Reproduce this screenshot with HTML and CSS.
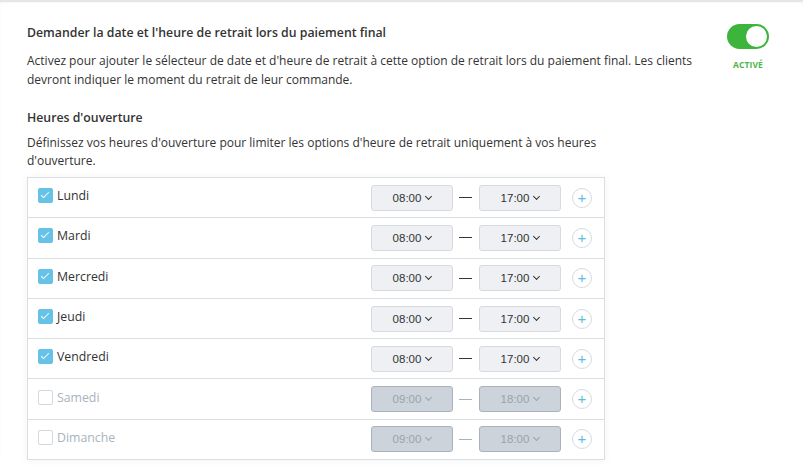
FILE: index.html
```html
<!DOCTYPE html>
<html>
  <head>
    <title>Retrait</title>
    <meta name="viewport" content="width=device-width, initial-scale=1">
    <link rel="stylesheet" href="styles.css">
  </head>
  <body>
    <div class="panel">
      <div class="setting">
        <div class="setting-text">
          <h3>Demander la date et l'heure de retrait lors du paiement final</h3>
          <p>Activez pour ajouter le sélecteur de date et d'heure de retrait à cette option de retrait lors du paiement final. Les clients devront indiquer le moment du retrait de leur commande.</p>
        </div>
        <div class="toggle-wrap">
          <div class="toggle on"><span class="knob"></span></div>
          <div class="toggle-label">ACTIVÉ</div>
        </div>
      </div>

      <div class="hours">
        <h3>Heures d'ouverture</h3>
        <p>Définissez vos heures d'ouverture pour limiter les options d'heure de retrait uniquement à vos heures d'ouverture.</p>

        <div class="days">
          <div class="day">
            <label class="check"><span class="box checked"></span>Lundi</label>
            <div class="times">
              <div class="select">08:00 <span class="caret"></span></div>
              <span class="dash"></span>
              <div class="select">17:00 <span class="caret"></span></div>
              <span class="add">+</span>
            </div>
          </div>
          <div class="day">
            <label class="check"><span class="box checked"></span>Mardi</label>
            <div class="times">
              <div class="select">08:00 <span class="caret"></span></div>
              <span class="dash"></span>
              <div class="select">17:00 <span class="caret"></span></div>
              <span class="add">+</span>
            </div>
          </div>
          <div class="day">
            <label class="check"><span class="box checked"></span>Mercredi</label>
            <div class="times">
              <div class="select">08:00 <span class="caret"></span></div>
              <span class="dash"></span>
              <div class="select">17:00 <span class="caret"></span></div>
              <span class="add">+</span>
            </div>
          </div>
          <div class="day">
            <label class="check"><span class="box checked"></span>Jeudi</label>
            <div class="times">
              <div class="select">08:00 <span class="caret"></span></div>
              <span class="dash"></span>
              <div class="select">17:00 <span class="caret"></span></div>
              <span class="add">+</span>
            </div>
          </div>
          <div class="day">
            <label class="check"><span class="box checked"></span>Vendredi</label>
            <div class="times">
              <div class="select">08:00 <span class="caret"></span></div>
              <span class="dash"></span>
              <div class="select">17:00 <span class="caret"></span></div>
              <span class="add">+</span>
            </div>
          </div>
          <div class="day off">
            <label class="check"><span class="box"></span>Samedi</label>
            <div class="times">
              <div class="select">09:00 <span class="caret"></span></div>
              <span class="dash"></span>
              <div class="select">18:00 <span class="caret"></span></div>
              <span class="add">+</span>
            </div>
          </div>
          <div class="day off">
            <label class="check"><span class="box"></span>Dimanche</label>
            <div class="times">
              <div class="select">09:00 <span class="caret"></span></div>
              <span class="dash"></span>
              <div class="select">18:00 <span class="caret"></span></div>
              <span class="add">+</span>
            </div>
          </div>
        </div>
      </div>
    </div>
  </body>
</html>
```

FILE: styles.css
```css
html {
  height: 100%;
}

body {
  margin: 0;
  height: 100%;
  background: #fff;
  color: #333;
  font-family: "Open Sans", "Noto Sans", sans-serif;
  font-size: 12px;
}

.panel {
  border-top: 2px solid #e4e7ea;
  box-shadow: inset 0 1px 2px rgba(0,0,0,.04);
  padding: 22px 0 0 27px;
}

h3 {
  margin: 0;
  font-size: 12.3px;
  font-weight: 600;
  line-height: 18px;
}

p {
  margin: 0;
  line-height: 19px;
}

.setting {
  display: flex;
  align-items: flex-start;
}

.setting-text {
  width: 672px;
}

.setting-text h3 {
  margin-bottom: 9px;
}

.toggle-wrap {
  margin: 0 0 0 28px;
  width: 42px;
  display: flex;
  flex-direction: column;
  align-items: center;
}

.toggle {
  width: 42px;
  height: 25px;
  border-radius: 13px;
  background: #cfd5db;
  position: relative;
}

.toggle.on {
  background: #3db53d;
}

.knob {
  position: absolute;
  top: 2px;
  right: 2px;
  width: 21px;
  height: 21px;
  border-radius: 50%;
  background: #fff;
}

.toggle-label {
  margin-top: 10px;
  font-size: 8.5px;
  font-weight: 700;
  color: #4bb64b;
  letter-spacing: .1px;
}

.hours {
  margin-top: 20px;
  width: 578px;
}

.hours h3 {
  margin-bottom: 7px;
}

.hours p {
  line-height: 18px;
  margin-bottom: 7px;
}

.days {
  border: 1px solid #d9dee3;
  box-shadow: 0 1px 8px rgba(0,0,0,.05);
}

.day {
  display: flex;
  align-items: center;
  justify-content: space-between;
  height: 39.3px;
  padding: 0 12px 0 10px;
}

.day + .day {
  border-top: 1px solid #d9dee3;
}

.check {
  display: flex;
  align-items: center;
  margin-top: -4px;
  font-size: 12.3px;
}

.box {
  width: 13px;
  height: 13px;
  border: 1px solid #d3d9df;
  border-radius: 2px;
  margin-right: 4px;
  background: #fff;
  position: relative;
}

.box.checked {
  background: #66c2e6;
  border-color: #66c2e6;
}

.box.checked::after {
  content: "";
  position: absolute;
  left: 4px;
  top: 1px;
  width: 3px;
  height: 7px;
  border: solid #fff;
  border-width: 0 1.5px 1.5px 0;
  transform: rotate(45deg);
}

.times {
  display: flex;
  align-items: center;
}

.select {
  width: 80px;
  height: 24px;
  border: 1px solid #d6dade;
  border-radius: 3px;
  background: #eef0f3;
  display: flex;
  align-items: center;
  justify-content: center;
  font-family: "Liberation Sans", Arial, sans-serif;
  font-size: 11.5px;
  color: #333;
}

.caret {
  width: 4px;
  height: 4px;
  border: solid #333;
  border-width: 0 1.5px 1.5px 0;
  transform: rotate(45deg);
  margin: -3px 0 0 5px;
}

.dash {
  width: 13px;
  height: 1px;
  background: #333;
  margin: 0 7px 0 6px;
}

.add {
  width: 18px;
  height: 18px;
  margin-left: 11px;
  border: 1px solid #d6dce2;
  border-radius: 50%;
  color: #5bbde0;
  font-family: "Liberation Sans", Arial, sans-serif;
  font-size: 15px;
  line-height: 17px;
  text-align: center;
}

.day.off .check {
  color: #a9b3bd;
}

.day.off .select {
  background: #ccd3da;
  border-color: #a8b3be;
  color: #9aa4ae;
}

.day.off .caret {
  border-color: #9aa4ae;
}

.day.off .dash {
  background: #a9b3bd;
}
```
